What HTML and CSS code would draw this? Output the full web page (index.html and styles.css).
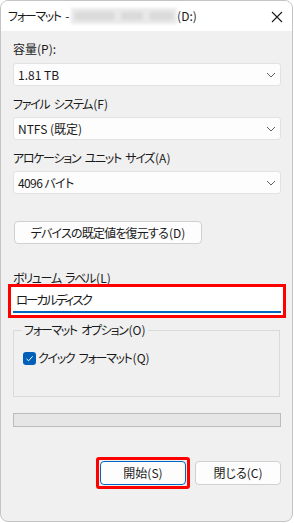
FILE: index.html
```html
<!DOCTYPE html>
<html lang="ja">
<head>
<meta charset="utf-8">
<link rel="stylesheet" href="styles.css">
</head>
<body>
<div class="window">
  <div class="titlebar">
    <span class="title"><span class="tk">フォーマット -</span><span class="blur"><span class="b1"></span><span class="b2"></span><span class="b3"></span></span>(D:)</span>
    <svg class="close" width="12" height="12" viewBox="0 0 12 12"><path d="M1 1 L11 11 M11 1 L1 11" stroke="#1a1a1a" stroke-width="1.1" fill="none"/></svg>
  </div>
  <div class="content">
    <div class="label first">容量(P):</div>
    <div class="combo"><span>1.81 TB</span><svg class="chev" width="10" height="6" viewBox="0 0 10 6"><path d="M1 1 L5 5 L9 1" stroke="#606060" stroke-width="1" fill="none"/></svg></div>
    <div class="label kana">ファイル システム<span class="acc">(F)</span></div>
    <div class="combo"><span>NTFS (既定)</span><svg class="chev" width="10" height="6" viewBox="0 0 10 6"><path d="M1 1 L5 5 L9 1" stroke="#606060" stroke-width="1" fill="none"/></svg></div>
    <div class="label kana">アロケーション ユニット サイズ<span class="acc">(A)</span></div>
    <div class="combo"><span class="kana-s">4096 バイト</span><svg class="chev" width="10" height="6" viewBox="0 0 10 6"><path d="M1 1 L5 5 L9 1" stroke="#606060" stroke-width="1" fill="none"/></svg></div>
    <div class="restore-row"><button class="btn restore">デバイスの既定値を復元する<span class="acc">(D)</span></button></div>
    <div class="label vol kana">ボリューム ラベル<span class="acc">(L)</span></div>
    <div class="input mark">ローカルディスク</div>
    <fieldset class="group">
      <legend class="kana">フォーマット オプション<span class="acc">(O)</span></legend>
      <div class="check"><span class="box"><svg width="9" height="9" viewBox="0 0 9 9"><path d="M1.5 4.8 L3.6 6.8 L7.6 2.4" stroke="#fff" stroke-width="1" fill="none"/></svg></span><span class="kana">クイック フォーマット<span class="acc">(Q)</span></span></div>
    </fieldset>
    <div class="progress"></div>
    <div class="actions">
      <span class="mark-btn"><button class="btn primary">開始(S)</button></span>
      <button class="btn">閉じる(C)</button>
    </div>
  </div>
</div>
</body>
</html>
```

FILE: styles.css
```css
* { box-sizing: border-box; }
html, body { margin: 0; padding: 0; background: #ffffff; }
body {
  font-family: "Noto Sans CJK JP", "Noto Sans", sans-serif;
  font-size: 12px;
  color: #1a1a1a;
  font-feature-settings: "palt";
}
.window {
  width: 293px;
  height: 522px;
  border: 1px solid #c4c4c4;
  border-radius: 8px;
  overflow: hidden;
  background: #f0f0f0;
  display: flex;
  flex-direction: column;
}
.titlebar {
  height: 30px;
  background: #ffffff;
  display: flex;
  align-items: center;
  justify-content: space-between;
  padding: 0 9px 0 7px;
  flex: none;
}
.title {
  display: flex;
  align-items: center;
  line-height: 16px;
  white-space: nowrap;
}
.tk { letter-spacing: -1.3px; word-spacing: 3px; }
.blur {
  display: inline-flex;
  width: 106px;
  height: 16px;
  margin: 0 0 0 3px;
  background: #e9e9e9;
  filter: blur(1.5px);
  align-items: center;
  gap: 6px;
  padding: 0 4px;
}
.blur span { height: 8px; background: #dadada; border-radius: 3px; }
.b1 { width: 40px; }
.b2 { width: 22px; }
.b3 { width: 24px; }
.close { display: block; margin-top: 1px; }
.content {
  padding: 10px 11px 0 12px;
  display: flex;
  flex-direction: column;
}
.label { line-height: 16px; margin-top: 10px; margin-bottom: 5px; }
.label.first { margin-top: 0; margin-bottom: 6px; }
.kana { letter-spacing: -1.3px; word-spacing: 3px; }
.acc { letter-spacing: 0; margin-left: 1px; }
.kana-s { letter-spacing: -0.6px; }
.combo {
  height: 23px;
  background: #fdfdfd;
  border: 1px solid #e2e2e2;
  border-radius: 3px;
  display: flex;
  align-items: center;
  justify-content: space-between;
  padding: 0 4px 0 4px;
  line-height: 16px;
}
.chev { display: block; margin-right: 0; }
.restore-row { display: flex; margin-top: 27px; }
.btn {
  font: inherit;
  color: #1a1a1a;
  background: #fdfdfd;
  border: 1px solid #d0d0d0;
  border-radius: 4px;
  height: 23px;
  padding: 0;
  line-height: 16px;
}
.restore { width: 188px; margin-left: 1px; letter-spacing: -0.8px; }
.label.vol { margin-top: 26px; margin-bottom: 3px; }
.input {
  height: 24px;
  background: #ffffff;
  border-bottom: 2px solid #0067c0;
  padding: 0 3px;
  line-height: 22px;
  font-size: 12.5px;
  letter-spacing: -2px;
}
.mark {
  box-shadow: 0 0 0 2px #ffffff, 0 0 0 5px #ff0000;
}
.group {
  margin: 9px 1px 0 0;
  padding: 12px 9px 30px 9px;
  border: 1px solid #dadada;
  min-width: 0;
}
.group legend { padding: 0 2px; line-height: 16px; margin-left: -1px; }
.check { display: flex; align-items: center; gap: 2px; line-height: 16px; }
.box {
  width: 13px;
  height: 13px;
  border-radius: 3px;
  background: #005fb8;
  display: flex;
  align-items: center;
  justify-content: center;
}
.box svg { display: block; }
.progress {
  margin-top: 16px;
  height: 14px;
  background: #e6e6e6;
  border: 1px solid #bcbcbc;
}
.actions {
  display: flex;
  justify-content: flex-end;
  align-items: center;
  gap: 5px;
  margin-top: 30px;
}
.actions .btn { width: 86px; height: 24px; }
.primary { border-color: #0067c0; }
.mark-btn {
  display: flex;
  padding: 1px;
  border: 3px solid #ff0000;
  border-radius: 3px;
}
```
